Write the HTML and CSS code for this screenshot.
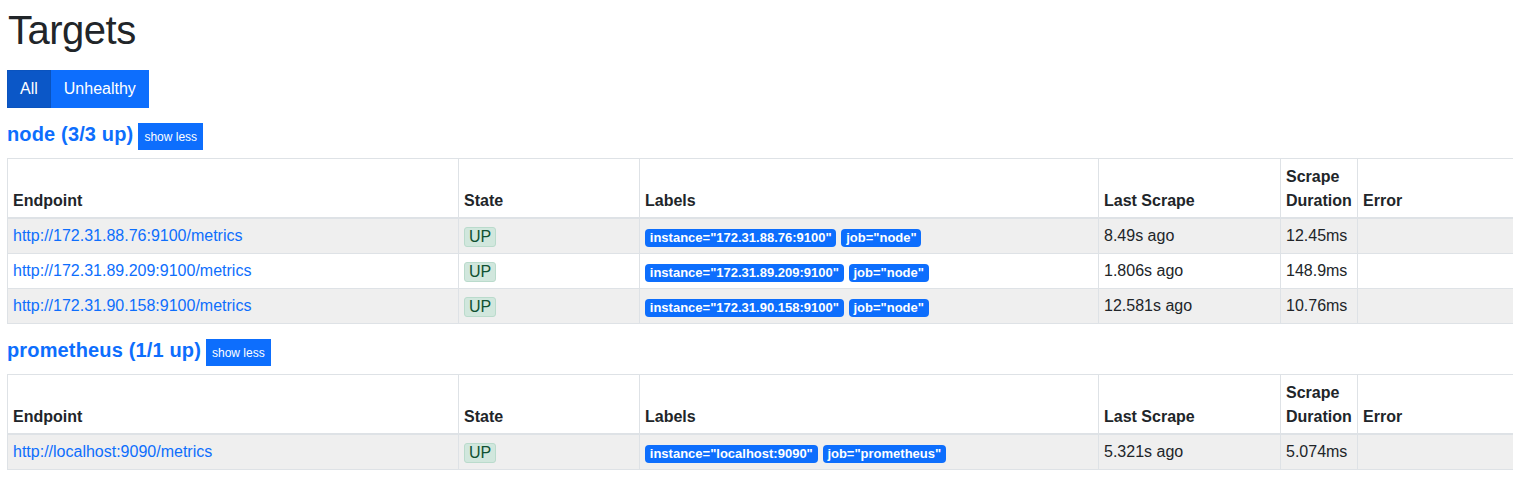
FILE: index.html
```html
<!DOCTYPE html>
<html lang="en">
<head>
<meta charset="utf-8">
<title>Targets</title>
<link rel="stylesheet" href="styles.css">
</head>
<body>
<div class="page">
  <h1 class="title">Targets</h1>
  <div class="btn-group">
    <button class="btn btn-active">All</button>
    <button class="btn">Unhealthy</button>
  </div>

  <div class="pool">
    <div class="pool-head">
      <a class="pool-title" href="#pool-node">node (3/3 up)</a>
      <button class="btn-sm">show less</button>
    </div>
    <table class="targets">
      <thead>
        <tr>
          <th class="c-endpoint">Endpoint</th>
          <th class="c-state">State</th>
          <th class="c-labels">Labels</th>
          <th class="c-last">Last Scrape</th>
          <th class="c-dur">Scrape Duration</th>
          <th class="c-err">Error</th>
        </tr>
      </thead>
      <tbody>
        <tr>
          <td><a href="#">http://172.31.88.76:9100/metrics</a></td>
          <td><span class="state-up">UP</span></td>
          <td><span class="label">instance="172.31.88.76:9100"</span><span class="label">job="node"</span></td>
          <td>8.49s ago</td>
          <td>12.45ms</td>
          <td></td>
        </tr>
        <tr>
          <td><a href="#">http://172.31.89.209:9100/metrics</a></td>
          <td><span class="state-up">UP</span></td>
          <td><span class="label">instance="172.31.89.209:9100"</span><span class="label">job="node"</span></td>
          <td>1.806s ago</td>
          <td>148.9ms</td>
          <td></td>
        </tr>
        <tr>
          <td><a href="#">http://172.31.90.158:9100/metrics</a></td>
          <td><span class="state-up">UP</span></td>
          <td><span class="label">instance="172.31.90.158:9100"</span><span class="label">job="node"</span></td>
          <td>12.581s ago</td>
          <td>10.76ms</td>
          <td></td>
        </tr>
      </tbody>
    </table>
  </div>

  <div class="pool">
    <div class="pool-head">
      <a class="pool-title" href="#pool-prometheus">prometheus (1/1 up)</a>
      <button class="btn-sm">show less</button>
    </div>
    <table class="targets">
      <thead>
        <tr>
          <th class="c-endpoint">Endpoint</th>
          <th class="c-state">State</th>
          <th class="c-labels">Labels</th>
          <th class="c-last">Last Scrape</th>
          <th class="c-dur">Scrape Duration</th>
          <th class="c-err">Error</th>
        </tr>
      </thead>
      <tbody>
        <tr>
          <td><a href="#">http://localhost:9090/metrics</a></td>
          <td><span class="state-up">UP</span></td>
          <td><span class="label">instance="localhost:9090"</span><span class="label">job="prometheus"</span></td>
          <td>5.321s ago</td>
          <td>5.074ms</td>
          <td></td>
        </tr>
      </tbody>
    </table>
  </div>
</div>
</body>
</html>
```

FILE: styles.css
```css
html, body {
  margin: 0;
  padding: 0;
  background: #fff;
}

body {
  font-family: "Liberation Sans", Arial, sans-serif;
  font-size: 16px;
  line-height: 1.5;
  color: #212529;
}

.page {
  padding: 6px 0 0 7px;
  overflow: hidden;
}

.title {
  margin: 0 0 16px 0;
  font-size: 40px;
  line-height: 48px;
  font-weight: 500;
  letter-spacing: -0.5px;
  padding-left: 1px;
}

.btn-group {
  display: flex;
  margin-bottom: 14px;
}

.btn {
  font-family: inherit;
  font-size: 16px;
  line-height: 24px;
  padding: 6px 12px;
  border: 1px solid #0d6efd;
  background: #0d6efd;
  color: #fff;
  border-radius: 0;
  margin: 0;
  cursor: pointer;
}

.btn-active {
  background: #0b57c7;
  border-color: #0a53be;
}

.pool {
  margin-bottom: 14px;
}

.pool-head {
  display: flex;
  align-items: baseline;
  gap: 5px;
  margin-bottom: 8px;
}

.pool-title {
  font-size: 20px;
  line-height: 24px;
  font-weight: 700;
  letter-spacing: 0.15px;
  color: #0d6efd;
  text-decoration: none;
}

.btn-sm {
  font-family: inherit;
  font-size: 12px;
  line-height: 18px;
  padding: 4px 5px 3px 5px;
  border: 1px solid #0d6efd;
  background: #0d6efd;
  color: #fff;
  border-radius: 0;
  margin: 0;
}

.targets {
  border-collapse: collapse;
  table-layout: fixed;
  width: 1806px;
}

.targets th,
.targets td {
  box-sizing: border-box;
  border: 1px solid #dee2e6;
  padding: 5px;
  text-align: left;
  vertical-align: top;
  line-height: 24px;
}

.targets th {
  padding: 6px 5px 4px 5px;
  vertical-align: bottom;
  font-weight: 700;
  border-bottom: 2px solid #dee2e6;
}

.targets tbody tr:nth-child(odd) td {
  background: #efefef;
}

.c-endpoint { width: 451px; }
.c-state { width: 181px; }
.c-labels { width: 459px; }
.c-last { width: 182px; }
.c-dur { width: 77px; }

.targets a {
  color: #0d6efd;
  text-decoration: none;
}

.state-up {
  display: inline-block;
  line-height: 18px;
  padding: 0 4px;
  background: #d1e7dd;
  border: 1px solid #badbcc;
  color: #0f5132;
  border-radius: 3px;
  vertical-align: middle;
}

.label {
  display: inline-block;
  font-size: 13px;
  line-height: 13px;
  font-weight: 700;
  color: #fff;
  background: #0d6efd;
  padding: 2.5px 4.8px;
  border-radius: 4px;
  margin-right: 5px;
  vertical-align: middle;
  position: relative;
  top: 1px;
}
```
